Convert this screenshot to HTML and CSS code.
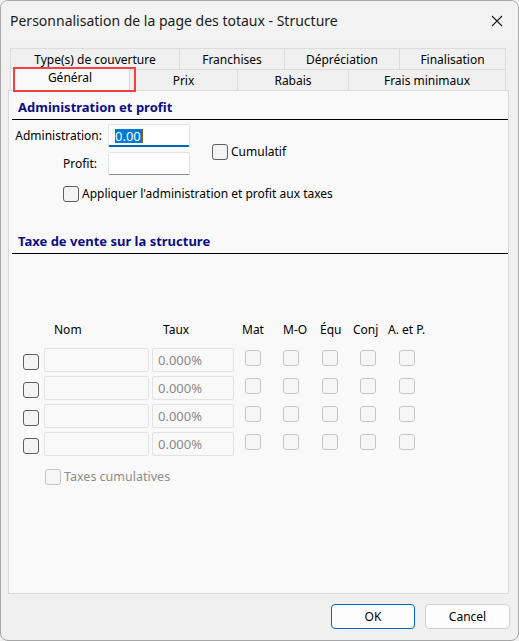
FILE: index.html
```html
<!DOCTYPE html>
<html lang="fr">
<head>
<meta charset="utf-8">
<title>Personnalisation de la page des totaux - Structure</title>
<link rel="stylesheet" href="styles.css">
</head>
<body>
<div class="window">
  <div class="titlebar">
    <span class="title">Personnalisation de la page des totaux - Structure</span>
    <svg class="close" width="12" height="12" viewBox="0 0 12 12"><path d="M1 1 L11 11 M11 1 L1 11" stroke="#1a1a1a" stroke-width="1.1" fill="none"/></svg>
  </div>
  <div class="tabs">
    <div class="tabrow back">
      <div class="tab t1">Type(s) de couverture</div>
      <div class="tab t2">Franchises</div>
      <div class="tab t3">Dépréciation</div>
      <div class="tab t4">Finalisation</div>
    </div>
    <div class="tabrow front">
      <div class="tab f1 selected">Général<span class="highlight"></span></div>
      <div class="tab f2">Prix</div>
      <div class="tab f3">Rabais</div>
      <div class="tab f4">Frais minimaux</div>
    </div>
  </div>
  <div class="panel">
    <div class="section-head">Administration et profit</div>
    <div class="admin">
      <label class="lbl lbl-admin">Administration:</label>
      <div class="textbox focused"><span class="sel">0.00</span><span class="caret"></span></div>
      <label class="check cumul"><input type="checkbox"><span>Cumulatif</span></label>
      <label class="lbl lbl-profit">Profit:</label>
      <div class="textbox"></div>
    </div>
    <label class="check apply"><input type="checkbox"><span>Appliquer l'administration et profit aux taxes</span></label>

    <div class="section-head tax">Taxe de vente sur la structure</div>
    <div class="taxgrid">
      <span class="h h-empty"></span>
      <span class="h h-nom">Nom</span>
      <span class="h h-taux">Taux</span>
      <span class="h h-mat">Mat</span>
      <span class="h h-mo">M-O</span>
      <span class="h h-equ">Équ</span>
      <span class="h h-conj">Conj</span>
      <span class="h h-ap">A. et P.</span>

      <input type="checkbox" class="rowcheck">
      <div class="dbox"></div><div class="dbox rate">0.000%</div>
      <input type="checkbox" class="small" disabled><input type="checkbox" class="small" disabled><input type="checkbox" class="small" disabled><input type="checkbox" class="small" disabled><input type="checkbox" class="small" disabled>

      <input type="checkbox" class="rowcheck">
      <div class="dbox"></div><div class="dbox rate">0.000%</div>
      <input type="checkbox" class="small" disabled><input type="checkbox" class="small" disabled><input type="checkbox" class="small" disabled><input type="checkbox" class="small" disabled><input type="checkbox" class="small" disabled>

      <input type="checkbox" class="rowcheck">
      <div class="dbox"></div><div class="dbox rate">0.000%</div>
      <input type="checkbox" class="small" disabled><input type="checkbox" class="small" disabled><input type="checkbox" class="small" disabled><input type="checkbox" class="small" disabled><input type="checkbox" class="small" disabled>

      <input type="checkbox" class="rowcheck">
      <div class="dbox"></div><div class="dbox rate">0.000%</div>
      <input type="checkbox" class="small" disabled><input type="checkbox" class="small" disabled><input type="checkbox" class="small" disabled><input type="checkbox" class="small" disabled><input type="checkbox" class="small" disabled>
    </div>
    <label class="check cumtax disabled"><input type="checkbox" disabled><span>Taxes cumulatives</span></label>
  </div>
  <div class="buttons">
    <button class="btn ok">OK</button>
    <button class="btn cancel">Cancel</button>
  </div>
</div>
</body>
</html>
```
FILE: styles.css
```css
* { box-sizing: border-box; }
html, body { margin: 0; padding: 0; background: #f0f0f0; }
body {
  font-family: "Noto Sans", "Open Sans", sans-serif;
  font-size: 12px;
  color: #000;
}
.window {
  width: 519px;
  height: 641px;
  border: 1px solid #a6a6a6;
  border-radius: 8px;
  background: #f0f0f0;
  display: flex;
  flex-direction: column;
  overflow: hidden;
}
.titlebar {
  height: 39px;
  display: flex;
  align-items: center;
  justify-content: space-between;
  padding: 0 15px 0 9px;
  background: #f3f3f3;
}
.title { font-size: 14px; color: #1a1a1a; }
.close { display: block; }

.tabs {
  margin-top: 8px;
  padding-left: 9px;
  display: flex;
  flex-direction: column;
}
.tabrow { display: flex; height: 21px; }
.tab {
  border: 1px solid #dcdcdc;
  border-bottom: none;
  border-left: none;
  background: #f0f0f0;
  display: flex;
  align-items: center;
  justify-content: center;
  line-height: 16px;
  padding-top: 1px;
}
.tab.t1, .tab.f1 { border-left: 1px solid #dcdcdc; }
.t1 { width: 170px; }
.t2 { width: 105px; }
.t3 { width: 115px; }
.t4 { width: 106px; }
.f1 { width: 120px; }
.f2 { width: 108px; }
.f3 { width: 111px; }
.f4 { width: 157px; }
.tab.selected {
  background: #f9f9f9;
  position: relative;
  padding-top: 0;
  padding-bottom: 4px;
  height: 22px;
  margin-top: -1px;
  z-index: 2;
}
.highlight {
  position: absolute;
  left: 2px;
  top: -2px;
  width: 123px;
  height: 25px;
  border: 2px solid #f24141;
  pointer-events: none;
}

.panel {
  margin-left: 7px;
  width: 501px;
  height: 504px;
  border: 1px solid #dadada;
  background: #f9f9f9;
  display: flex;
  flex-direction: column;
  align-items: flex-start;
}
.section-head {
  align-self: stretch;
  margin-left: 3px;
  padding: 7px 0 3px 6px;
  line-height: 18px;
  font-weight: bold;
  font-size: 13px;
  color: #0c0c84;
  border-bottom: 1px solid #000;
}
.section-head.tax { margin-top: 23px; }

.admin {
  margin-top: 4px;
  display: grid;
  grid-template-columns: 93px 82px auto;
  grid-template-rows: 23px 23px;
  column-gap: 6px;
  row-gap: 5px;
  align-items: center;
}
.lbl { justify-self: end; }
.lbl-profit { margin-right: 5px; }
.textbox {
  height: 23px;
  background: #fff;
  border: 1px solid #e3e3e3;
  border-bottom: 1px solid #8a8a8a;
  border-radius: 2px;
  display: flex;
  align-items: center;
  padding-left: 6px;
}
.textbox.focused { border-bottom: 2px solid #0067c0; padding-top: 1px; }
.sel {
  background: #0078d7;
  color: #fff;
  font-size: 13px;
  line-height: 14px;
  padding: 0 1px 0 0;
}
.caret { width: 1px; height: 14px; background: #8a5a20; }

.check { display: flex; align-items: center; gap: 3px; }
.check.cumul {
  grid-column: 3;
  grid-row: 1 / span 2;
  margin-left: 16px;
  margin-top: 4px;
}
.check.apply { margin-top: 10px; margin-left: 54px; }

input[type=checkbox] {
  appearance: none;
  -webkit-appearance: none;
  margin: 0;
  width: 16px;
  height: 16px;
  border: 1px solid #5f5f5f;
  border-radius: 3px;
  background: #f3f3f3;
  flex: none;
}
input[type=checkbox]:disabled {
  border-color: #c6c6c6;
  background: #f6f6f6;
}
.check.disabled span { color: #8c8c8c; font-size: 12.5px; }

.taxgrid {
  margin-top: 68px;
  margin-left: 14px;
  display: grid;
  grid-template-columns: 21px 108px 93px 38px 39px 38px 39px 40px;
  grid-template-rows: 22px repeat(4, 24px);
  row-gap: 4px;
}
.taxgrid .h { line-height: 16px; white-space: nowrap; align-self: start; }
.taxgrid .h-nom { margin-left: 10px; }
.taxgrid .h-taux { margin-left: 11px; }
.taxgrid .h-mat { margin-left: -3px; }
.taxgrid .h-mo { margin-left: 0; }
.taxgrid .h-equ { margin-left: -2px; }
.taxgrid .h-conj { margin-left: -7px; }
.taxgrid .h-ap { margin-left: -11px; }
.rowcheck { align-self: start; margin-top: 6px !important; }
input.small { align-self: start; margin-top: 2px !important; }
.dbox {
  height: 24px;
  width: 105px;
  border: 1px solid #e2e2e2;
  border-radius: 2px;
  background: #f9f9f9;
}
.dbox.rate {
  width: 82px;
  color: #8a8a8a;
  font-size: 13px;
  display: flex;
  align-items: center;
  padding-left: 5px;
}

.check.cumtax { margin-top: 12px; margin-left: 36px; }

.buttons {
  margin-top: 10px;
  display: flex;
  justify-content: flex-end;
  gap: 10px;
  padding-right: 8px;
}
.btn {
  height: 25px;
  border-radius: 4px;
  background: #fdfdfd;
  border: 1px solid #d0d0d0;
  font-family: "Noto Sans", "Open Sans", sans-serif;
  font-size: 12px;
  color: #000;
  padding: 0;
}
.btn.ok { width: 84px; border-color: #0067c0; }
.btn.cancel { width: 85px; }
```
